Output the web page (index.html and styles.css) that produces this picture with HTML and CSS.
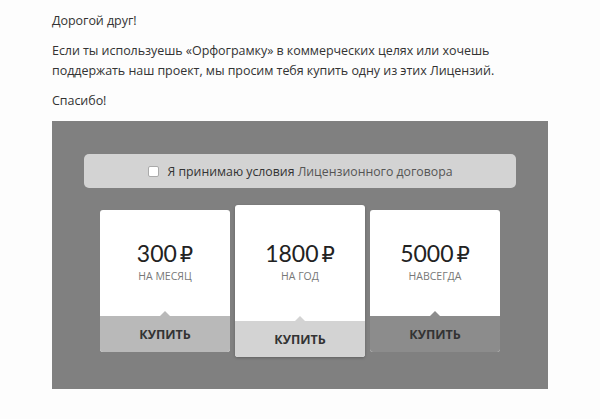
FILE: index.html
```html
<!DOCTYPE html>
<html lang="ru">
<head>
<meta charset="utf-8">
<link rel="stylesheet" href="styles.css">
</head>
<body>
<div class="page">
  <p class="para">Дорогой друг!</p>
  <p class="para">Если ты используешь «Орфограмку» в коммерческих целях или хочешь поддержать наш проект, мы просим тебя купить одну из этих Лицензий.</p>
  <p class="para">Спасибо!</p>
  <div class="panel">
    <label class="agree">
      <span class="box"></span>
      <span class="agree-text">Я принимаю условия <span class="link">Лицензионного договора</span></span>
    </label>
    <div class="cards">
      <div class="card">
        <div class="card-body">
          <div class="price">300<span class="rub">₽</span></div>
          <div class="period">НА МЕСЯЦ</div>
        </div>
        <div class="buy buy-mid">КУПИТЬ</div>
      </div>
      <div class="card card-main">
        <div class="card-body">
          <div class="price">1800<span class="rub">₽</span></div>
          <div class="period">НА ГОД</div>
        </div>
        <div class="buy buy-light">КУПИТЬ</div>
      </div>
      <div class="card">
        <div class="card-body">
          <div class="price">5000<span class="rub">₽</span></div>
          <div class="period">НАВСЕГДА</div>
        </div>
        <div class="buy buy-dark">КУПИТЬ</div>
      </div>
    </div>
  </div>
</div>
</body>
</html>
```
FILE: styles.css
```css
html, body {
  margin: 0;
  padding: 0;
  background: #fdfdfd;
}
body {
  font-family: "Open Sans", "Noto Sans", sans-serif;
  color: #333;
}
.page {
  width: 496px;
  margin: 0 auto;
  padding-top: 11px;
}
.para {
  margin: 0 0 10px 0;
  font-size: 12.5px;
  line-height: 20px;
  letter-spacing: -0.05px;
  color: #333;
}
.panel {
  margin-top: 10px;
  background: #808080;
  height: 268px;
  padding-top: 33px;
  box-sizing: border-box;
  display: flex;
  flex-direction: column;
  align-items: center;
}
.agree {
  width: 432px;
  height: 34px;
  background: #d3d3d3;
  border-radius: 5px;
  display: flex;
  align-items: center;
  justify-content: center;
  gap: 9px;
  font-size: 12.3px;
  color: #333;
}
.box {
  width: 9px;
  height: 9px;
  background: #fff;
  border: 1px solid #aaa;
  border-radius: 2px;
}
.link {
  color: #555;
}
.cards {
  margin-top: 17px;
  display: flex;
  gap: 5px;
  align-items: center;
}
.card {
  width: 130px;
  height: 142px;
  border-radius: 3px;
  overflow: hidden;
  display: flex;
  flex-direction: column;
  background: #fff;
}
.card-main {
  height: 152px;
  box-shadow: 0 1px 3px rgba(0,0,0,0.25);
}
.card-body {
  flex: 1;
  display: flex;
  flex-direction: column;
  align-items: center;
  justify-content: center;
  padding-bottom: 4px;
}
.price {
  font-family: "Lato", "Open Sans", sans-serif;
  font-size: 23px;
  line-height: 26px;
  color: #222;
  display: flex;
  align-items: baseline;
}
.rub {
  margin-left: 3px;
  font-family: "DejaVu Sans", sans-serif;
  font-size: 21px;
}
.period {
  margin-top: 1px;
  font-size: 10.5px;
  color: #777;
}
.buy {
  position: relative;
  height: 36px;
  display: flex;
  align-items: center;
  justify-content: center;
  font-size: 12.5px;
  font-weight: 700;
  color: #333;
}
.buy::before {
  content: "";
  position: absolute;
  top: -5px;
  left: 50%;
  margin-left: -5px;
  border-left: 5px solid transparent;
  border-right: 5px solid transparent;
  border-bottom: 5px solid currentColor;
}
.buy-mid { background: #b9b9b9; }
.buy-mid::before { border-bottom-color: #b9b9b9; }
.buy-light { background: #d3d3d3; }
.buy-light::before { border-bottom-color: #d3d3d3; }
.buy-dark { background: #8c8c8c; }
.buy-dark::before { border-bottom-color: #8c8c8c; }
```
